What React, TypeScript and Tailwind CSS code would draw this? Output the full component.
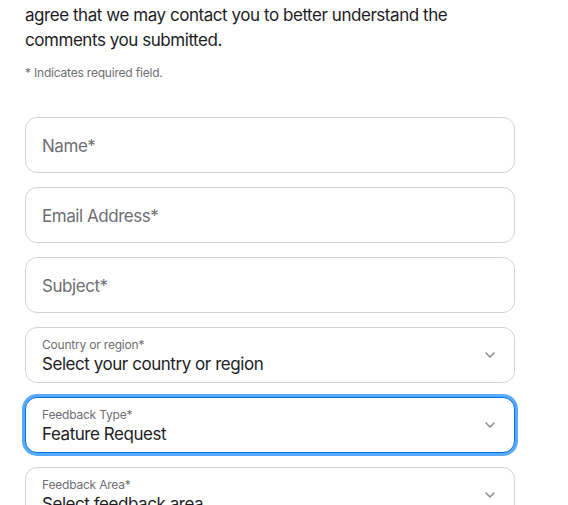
const FONT = { fontFamily: 'Inter, "Liberation Sans", sans-serif' }

function Chevron() {
  return (
    <svg width="12" height="8" viewBox="0 0 12 8" className="absolute right-[18px] top-1/2 -translate-y-1/2">
      <path d="M2 2 L6 6 L10 2" fill="none" stroke="#86868b" strokeWidth="1.4" strokeLinecap="round" strokeLinejoin="round" />
    </svg>
  )
}

function TextField({ placeholder }: { placeholder: string }) {
  return (
    <div className="h-[56px] rounded-[12px] border border-[#d2d2d7] bg-white flex items-center px-4 pt-[3px]">
      <span className="text-[17px] text-[#6e6e73] tracking-[-0.45px]">{placeholder}</span>
    </div>
  )
}

function SelectField({ label, value, focused }: { label: string; value: string; focused?: boolean }) {
  return (
    <div
      className={`relative h-[56px] rounded-[12px] bg-white flex flex-col justify-center px-4 ${
        focused
          ? 'border border-[#0071e3] shadow-[0_0_0_3px_rgba(0,125,250,0.65)]'
          : 'border border-[#d2d2d7]'
      }`}
    >
      <span className="text-[12px] leading-[16px] text-[#6e6e73] mt-[1px] tracking-[-0.2px]">{label}</span>
      <span className="text-[17px] leading-[21px] text-[#1d1d1f] tracking-[-0.45px] mt-[1px]">{value}</span>
      <Chevron />
    </div>
  )
}

export default function App() {
  return (
    <div className="w-[568px] h-[505px] overflow-hidden bg-white" style={FONT}>
      <div className="pl-[25px] w-[490px] box-content">
        <p className="pt-[3px] text-[17px] leading-[25px] text-[#1d1d1f] tracking-[-0.45px]">
          agree that we may contact you to better understand the
          <br />
          comments you submitted.
        </p>
        <p className="mt-[12px] text-[12px] leading-[16px] text-[#6e6e73] tracking-[-0.2px]">* Indicates required field.</p>
        <div className="mt-[36px] flex flex-col gap-[14px]">
          <TextField placeholder="Name*" />
          <TextField placeholder="Email Address*" />
          <TextField placeholder="Subject*" />
          <SelectField label="Country or region*" value="Select your country or region" />
          <SelectField label="Feedback Type*" value="Feature Request" focused />
          <SelectField label="Feedback Area*" value="Select feedback area" />
        </div>
      </div>
    </div>
  )
}
